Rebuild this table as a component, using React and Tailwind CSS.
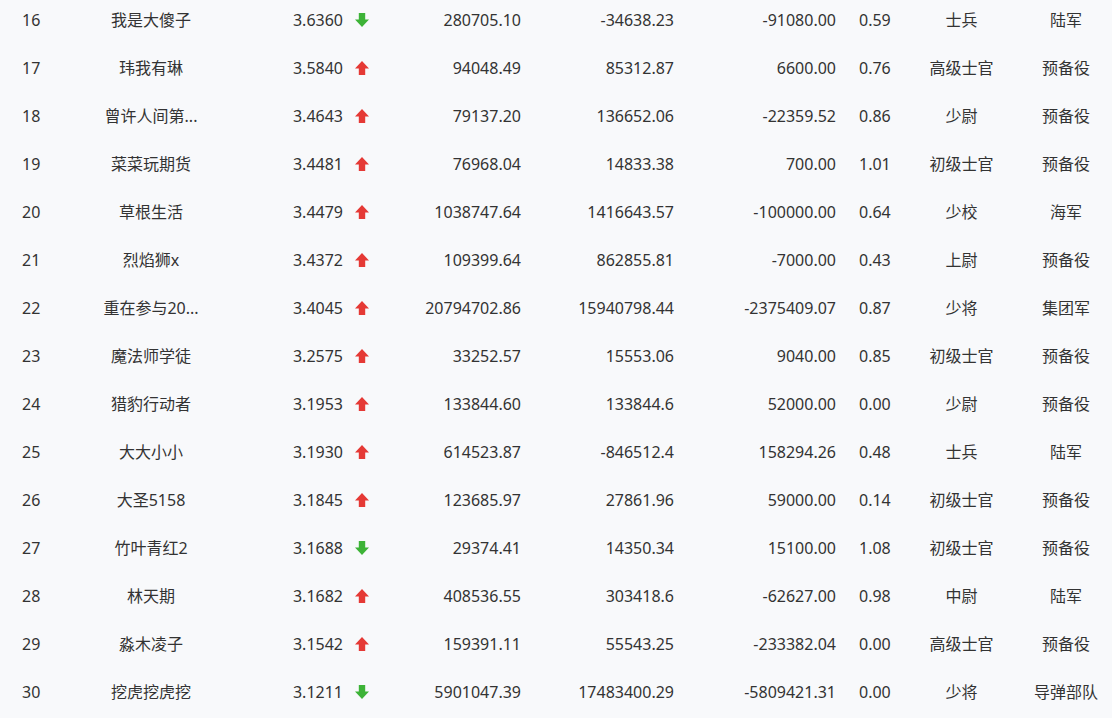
import React from 'react';

const ROWS = [
  [16, '我是大傻子', '3.6360', 'down', '280705.10', '-34638.23', '-91080.00', '0.59', '士兵', '陆军'],
  [17, '玮我有琳', '3.5840', 'up', '94048.49', '85312.87', '6600.00', '0.76', '高级士官', '预备役'],
  [18, '曾许人间第...', '3.4643', 'up', '79137.20', '136652.06', '-22359.52', '0.86', '少尉', '预备役'],
  [19, '菜菜玩期货', '3.4481', 'up', '76968.04', '14833.38', '700.00', '1.01', '初级士官', '预备役'],
  [20, '草根生活', '3.4479', 'up', '1038747.64', '1416643.57', '-100000.00', '0.64', '少校', '海军'],
  [21, '烈焰狮x', '3.4372', 'up', '109399.64', '862855.81', '-7000.00', '0.43', '上尉', '预备役'],
  [22, '重在参与20...', '3.4045', 'up', '20794702.86', '15940798.44', '-2375409.07', '0.87', '少将', '集团军'],
  [23, '魔法师学徒', '3.2575', 'up', '33252.57', '15553.06', '9040.00', '0.85', '初级士官', '预备役'],
  [24, '猎豹行动者', '3.1953', 'up', '133844.60', '133844.6', '52000.00', '0.00', '少尉', '预备役'],
  [25, '大大小小', '3.1930', 'up', '614523.87', '-846512.4', '158294.26', '0.48', '士兵', '陆军'],
  [26, '大圣5158', '3.1845', 'up', '123685.97', '27861.96', '59000.00', '0.14', '初级士官', '预备役'],
  [27, '竹叶青红2', '3.1688', 'down', '29374.41', '14350.34', '15100.00', '1.08', '初级士官', '预备役'],
  [28, '林天期', '3.1682', 'up', '408536.55', '303418.6', '-62627.00', '0.98', '中尉', '陆军'],
  [29, '淼木凌子', '3.1542', 'up', '159391.11', '55543.25', '-233382.04', '0.00', '高级士官', '预备役'],
  [30, '挖虎挖虎挖', '3.1211', 'down', '5901047.39', '17483400.29', '-5809421.31', '0.00', '少将', '导弹部队'],
];

function Trend({ dir }) {
  if (dir === 'down') {
    return (
      <svg width="14" height="14" viewBox="0 0 14 14" className="block">
        <path d="M3.8 0h6.4v6.5H14L7 14 0 6.5h3.8z" fill="#3db337" />
      </svg>
    );
  }
  return (
    <svg width="14" height="14" viewBox="0 0 14 14" className="block">
      <path d="M7 0l7 7.5h-3.8V14H3.8V7.5H0z" fill="#e53935" />
    </svg>
  );
}

export default function App() {
  return (
    <div
      className="w-[1112px] h-[718px] overflow-hidden bg-[#f8f9fb] text-[16px] text-[#333]"
      style={{ fontFamily: '"Noto Sans", "Noto Sans CJK SC", sans-serif' }}
    >
      <div className="-mt-[4px]">
        {ROWS.map((r) => (
          <div
            key={r[0]}
            className="grid h-[48px] items-center grid-cols-[101px_100px_142px_37px_141px_153px_162px_79px_93px_104px]"
          >
            <div className="pl-[22px]">{r[0]}</div>
            <div className="whitespace-nowrap text-center">{r[1]}</div>
            <div className="text-right">{r[2]}</div>
            <div className="pl-[12px]">
              <Trend dir={r[3]} />
            </div>
            <div className="text-right">{r[4]}</div>
            <div className="text-right">{r[5]}</div>
            <div className="text-right">{r[6]}</div>
            <div className="pl-[23px]">{r[7]}</div>
            <div className="text-center">{r[8]}</div>
            <div className="pl-[12px] text-center">{r[9]}</div>
          </div>
        ))}
      </div>
    </div>
  );
}
